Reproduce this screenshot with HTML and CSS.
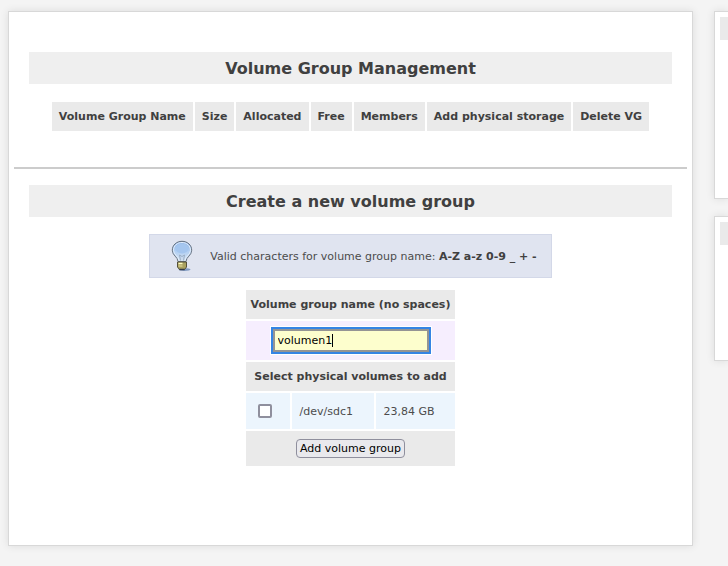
FILE: index.html
```html
<!DOCTYPE html>
<html lang="en">
<head>
<meta charset="utf-8">
<title>Volume Group Management</title>
<link rel="stylesheet" href="styles.css">
</head>
<body>
<div class="page">
  <main class="panel content">
    <section class="section">
      <h2 class="heading">Volume Group Management</h2>
      <table class="grid groups">
        <thead>
          <tr>
            <th>Volume Group Name</th><th>Size</th><th>Allocated</th><th>Free</th><th>Members</th><th>Add physical storage</th><th>Delete VG</th>
          </tr>
        </thead>
      </table>
    </section>
    <hr class="divider">
    <section class="section">
      <h2 class="heading">Create a new volume group</h2>
      <div class="note">
        <svg class="bulb" viewBox="0 0 24 32" aria-hidden="true">
          <defs>
            <linearGradient id="glass" x1="0" y1="0" x2="0" y2="1">
              <stop offset="0" stop-color="#8eb2e4"/>
              <stop offset=".5" stop-color="#b3d0f3"/>
              <stop offset="1" stop-color="#d5e1ef"/>
            </linearGradient>
          </defs>
          <ellipse cx="14.500" cy="29.500" rx="6" ry="1.500" fill="#829bc2"/>
          <path d="M8 21.500C8 17 2.300 15.500 2.300 10.300C2.300 5 6.600 1.300 12 1.300s9.700 3.700 9.700 9c0 5.200-5.700 6.700-5.700 11.200z" fill="url(#glass)" stroke="#66717f" stroke-width="1"/>
          <path d="M9 20.500C8.700 16 3.500 14.800 3.500 10.300C3.500 5.800 7.300 2.500 12 2.500s8.500 3.300 8.500 7.800c0 4.500-5.200 5.700-5.500 10.200" fill="none" stroke="#e4effc" stroke-width="1"/>
          <ellipse cx="12" cy="8.500" rx="6.500" ry="5" fill="#a5c6ef"/>
          <path d="M9.500 15l1 5.500M14.500 15l-1 5.500M9.500 15l2.500 1.500 2.500-1.500" fill="none" stroke="#9cafc6" stroke-width="1"/>
          <path d="M7.500 22h9v5l-2 2.500h-5l-2-2.500z" fill="#aaa260" stroke="#55513a" stroke-width="1"/>
          <path d="M8.500 23.500h4" stroke="#fffbc0" stroke-width="1.500"/>
          <path d="M8.500 26h4" stroke="#e8dfa0" stroke-width="1"/>
          <path d="M9.500 29.500h5" stroke="#343b4a" stroke-width="1.500"/>
        </svg>
        <p class="note-text">Valid characters for volume group name: <strong>A-Z a-z 0-9 _ + -</strong></p>
      </div>
      <form>
        <table class="grid create">
          <tr><th colspan="3"><label for="vgname">Volume group name (no spaces)</label></th></tr>
          <tr>
            <td class="name-cell" colspan="3">
              <div class="field">
                <input class="name" id="vgname" type="text" value="volumen1" autofocus>
                <span class="caret"></span>
              </div>
            </td>
          </tr>
          <tr><th colspan="3">Select physical volumes to add</th></tr>
          <tr class="volume">
            <td class="check-cell"><input class="check" id="sdc1" type="checkbox"></td>
            <td class="device"><label for="sdc1">/dev/sdc1</label></td>
            <td>23,84 GB</td>
          </tr>
          <tr><td class="submit-cell" colspan="3"><button class="submit" type="button">Add volume group</button></td></tr>
        </table>
      </form>
    </section>
  </main>
  <aside class="sidebar">
    <div class="panel side side-tall"><div class="side-title"></div></div>
    <div class="panel side"><div class="side-title"></div></div>
  </aside>
</div>
<script src="focus.js"></script>
</body>
</html>
```
FILE: focus.js
```js
const field = document.getElementById("vgname");
field.focus();
field.setSelectionRange(field.value.length, field.value.length);
```
FILE: styles.css
```css
* {
  box-sizing: border-box;
}

body {
  margin: 0;
  background: #f4f4f4;
  color: #4c4c4c;
  font: 11px/13px "DejaVu Sans", sans-serif;
}

.page {
  display: flex;
  align-items: flex-start;
  gap: 21px;
  padding: 11px 0 20px 8px;
}

.panel {
  background: #fff;
  border: 1px solid #d8d8d8;
  box-shadow: 0 0 8px rgba(0, 0, 0, 0.1);
}

.content {
  flex: 1;
  min-width: 0;
  padding: 40px 5px 77px;
}

.section {
  padding: 0 15px;
}

.heading {
  margin: 0;
  padding: 7px 6px 5px;
  background: #efefef;
  color: #404040;
  font-size: 16px;
  line-height: 20px;
  text-align: center;
}

.divider {
  height: 2px;
  margin: 36px 0 16px;
  border: 0;
  background: #ccc;
}

.grid {
  margin: 0 auto;
  border-collapse: separate;
  border-spacing: 2px;
}

.grid th {
  padding: 8px 7px;
  background: #eaeaea;
  color: #404040;
}

.groups {
  margin-top: 16px;
  margin-bottom: -2px;
}

.note {
  display: flex;
  align-items: center;
  width: fit-content;
  margin: 17px auto 10px;
  padding: 5px 14px 5px 20px;
  background: #e0e4f0;
  border: 1px solid #d3d8e8;
}

.bulb {
  width: 24px;
  height: 32px;
}

.note-text {
  margin: 0 0 0 16px;
}

.note strong {
  color: #404040;
}

.create .device,
.create th {
  padding: 8px 5px;
}

.name-cell {
  padding: 8px;
  background: #f6eefe;
}

.field {
  position: relative;
  width: 156px;
  margin: 0 auto;
}

.name {
  display: block;
  width: 100%;
  height: 23px;
  padding: 1px 3px;
  background: #fdfecd;
  border: 2px solid #949494;
  color: #000;
  caret-color: transparent;
  font: inherit;
}

.name:focus {
  outline: 2px solid #3584e4;
  box-shadow: 0 0 0 3px #fff;
}

.caret {
  position: absolute;
  top: 5px;
  left: 59px;
  width: 1px;
  height: 13px;
  background: #000;
}

.create .volume td {
  height: 36px;
  padding: 0 8px;
  background: #ecf5fd;
}

.create .volume .check-cell {
  width: 44px;
  padding: 0 12px;
}

.create .volume .device {
  width: 82px;
}

.check {
  display: block;
  width: 14px;
  height: 14px;
  margin: 0;
  appearance: none;
  background: #fff;
  border: 2px solid #8f8f9d;
  border-radius: 2px;
}

.check:checked {
  background: #3584e4;
}

.submit-cell {
  padding: 8px;
  background: #eaeaea;
}

.submit {
  display: block;
  margin: 0 auto;
  padding: 2px 3px;
  background: #e9e9ed;
  border: 1px solid #8f8f9d;
  border-radius: 4px;
  color: #000;
  font: inherit;
}

.sidebar {
  flex: 0 0 14px;
}

.side {
  min-height: 145px;
  margin-bottom: 17px;
  padding: 5px 0 5px 5px;
  border-right: 0;
}

.side-tall {
  min-height: 188px;
}

.side-title {
  height: 23px;
  background: #eaeaea;
}
```
